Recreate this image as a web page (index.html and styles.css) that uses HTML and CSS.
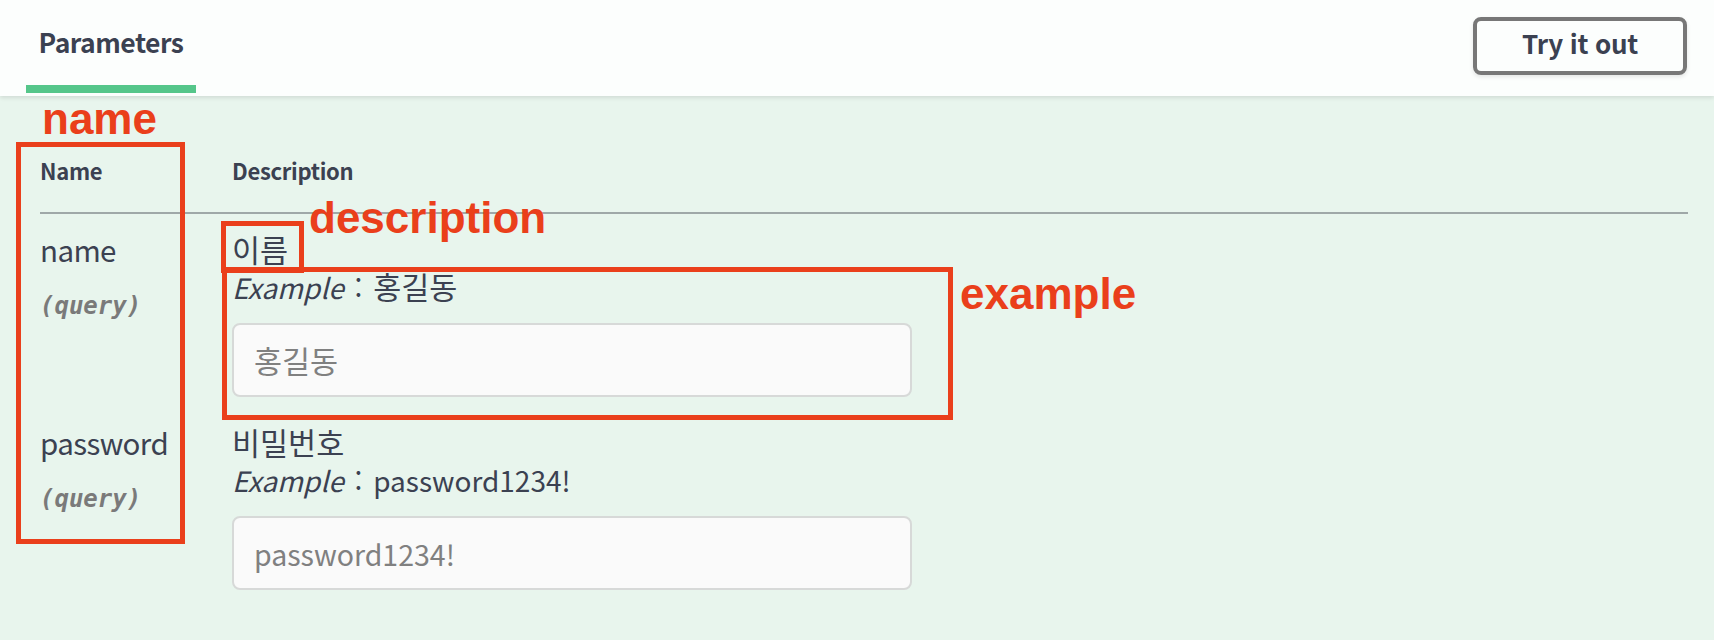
FILE: index.html
```html
<!DOCTYPE html>
<html lang="ko">
<head>
<meta charset="utf-8">
<title>Parameters</title>
<link rel="stylesheet" href="styles.css">
</head>
<body>
<div class="page">
  <header class="tabbar">
    <div class="tab">Parameters</div>
    <button class="try-btn" type="button">Try it out</button>
  </header>

  <main class="params">
    <div class="params-table">
      <div class="th">Name</div>
      <div class="th">Description</div>

      <div class="td td-name">
        <div class="param-name">name</div>
        <div class="param-in">(query)</div>
      </div>
      <div class="td td-desc">
        <p class="desc"><span class="ko">이름</span></p>
        <div class="example"><i>Example</i> : <span class="ko">홍길동</span></div>
        <input class="param-input ko-input" type="text" placeholder="홍길동">
      </div>

      <div class="td td-name">
        <div class="param-name">password</div>
        <div class="param-in">(query)</div>
      </div>
      <div class="td td-desc">
        <p class="desc"><span class="ko">비밀번호</span></p>
        <div class="example"><i>Example</i> : password1234!</div>
        <input class="param-input" type="text" placeholder="password1234!">
      </div>
    </div>
  </main>

  <div class="note-box box-name"></div>
  <div class="note-box box-desc"></div>
  <div class="note-box box-example"></div>
  <div class="note-label label-name">name</div>
  <div class="note-label label-desc">description</div>
  <div class="note-label label-example">example</div>
</div>
</body>
</html>
```

FILE: styles.css
```css
* { box-sizing: border-box; }

html, body {
  margin: 0;
  padding: 0;
  background: #e8f5ed;
}

.page {
  position: relative;
  width: 1714px;
  height: 640px;
  overflow: hidden;
  background: #e8f5ed;
  color: #3b4151;
  font-family: "Noto Sans CJK KR", "Noto Sans", sans-serif;
}

/* header with tab and button */
.tabbar {
  position: relative;
  z-index: 1;
  display: flex;
  justify-content: space-between;
  align-items: flex-start;
  height: 96px;
  padding: 0 27px 0 26px;
  background: #fcfefd;
  box-shadow: 0 2px 4px rgba(0, 0, 0, 0.1);
}

.tab {
  width: 170px;
  padding: 22px 0 23px;
  line-height: 40px;
  font-size: 26.5px;
  letter-spacing: -0.5px;
  font-weight: 700;
  text-align: center;
  border-bottom: 8px solid #55c68a;
}

.try-btn {
  margin-top: 17px;
  width: 214px;
  height: 58px;
  padding: 0 0 6px;
  border: 4px solid #777777;
  border-radius: 8px;
  background: transparent;
  color: #3b4151;
  font-family: inherit;
  font-size: 26px;
  letter-spacing: -0.3px;
  font-weight: 700;
  line-height: 40px;
  box-shadow: 0 2px 4px rgba(0, 0, 0, 0.1);
}

/* table */
.params {
  padding: 0 26px 0 40px;
}

.params-table {
  display: grid;
  grid-template-columns: 192px 1fr;
}

.th {
  padding: 57px 0 25px;
  font-size: 22px;
  letter-spacing: -0.3px;
  line-height: 34px;
  font-weight: 700;
  border-bottom: 2px solid #9fa8a8;
}

.td {
  padding: 18px 0 10px;
}

.param-name {
  font-size: 29.5px;
  letter-spacing: -0.6px;
  line-height: 34px;
}

.param-in {
  margin-top: 23px;
  font-family: "DejaVu Sans Mono", monospace;
  font-size: 24px;
  line-height: 34px;
  font-style: italic;
  font-weight: 700;
  color: #7a7a7a;
}

.desc {
  margin: 0;
  font-size: 28px;
  line-height: 37px;
}

.example {
  font-size: 28px;
  line-height: 37px;
  word-spacing: 3px;
}

.ko {
  font-size: 30.5px;
  line-height: 28px;
  word-spacing: 0;
}

.param-input {
  display: block;
  margin-top: 17px;
  width: 680px;
  height: 74px;
  padding: 0 20px;
  border: 2px solid #d7d9d8;
  border-radius: 8px;
  background: #fafafa;
  font-family: inherit;
  font-size: 28.5px;
  color: #3b4151;
}

.ko-input {
  font-size: 30.5px;
}

.param-input::placeholder {
  color: #808080;
}

/* red annotation overlay */
.note-box {
  position: absolute;
  border: 5px solid #ea3f1b;
}

.box-name { left: 16px; top: 142px; width: 169px; height: 402px; }
.box-desc { left: 221px; top: 221px; width: 83px; height: 52px; }
.box-example { left: 222px; top: 267px; width: 731px; height: 153px; }

.note-label {
  position: absolute;
  font-family: "Liberation Sans", Arial, sans-serif;
  font-size: 44px;
  font-weight: 700;
  line-height: 44px;
  color: #ea3f1b;
}

.label-name { left: 42px; top: 97px; }
.label-desc { left: 309px; top: 196px; }
.label-example { left: 960px; top: 272px; }
```
